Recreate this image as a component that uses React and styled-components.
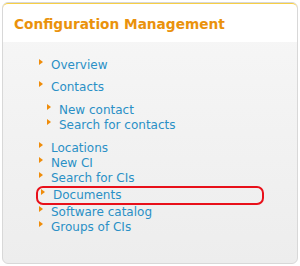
import React from "react";
import styled, { createGlobalStyle } from "styled-components";

const Global = createGlobalStyle`
    html, body {
        margin: 0;
        padding: 0;
        background: #ffffff;
    }
    body {
        font-family: "DejaVu Sans", Verdana, sans-serif;
    }
`;

const Page = styled.div`
    width: 300px;
    height: 266px;
    overflow: hidden;
    padding: 2px 2px 0 2px;
    box-sizing: border-box;
    display: flex;
    flex-direction: column;
    gap: 2px;
`;

const Panel = styled.div`
    border: 1px solid #d8d8d8;
    border-radius: 6px;
    overflow: hidden;
    background: linear-gradient(#f7f7f7, #ededed);
    height: ${(props) => props.h}px;
    flex-shrink: 0;
`;

const Header = styled.div`
    height: 38px;
    background: #ffffff;
    border-top: 2px solid #f7cf45;
    border-left: 1px solid #f7cf45;
    border-right: 1px solid #f7cf45;
    border-radius: 6px 6px 0 0;
    margin: -1px -1px 0 -1px;
    padding-left: 11px;
    display: flex;
    align-items: center;
`;

const Title = styled.h2`
    margin: 1px 0 0 0;
    font-size: 13.7px;
    font-weight: bold;
    color: #ea920c;
`;

const Body = styled.div`
    padding: 16px 0 0 33px;
    display: flex;
    flex-direction: column;
    gap: 7px;
`;

const List = styled.ul`
    list-style: none;
    margin: 0;
    padding: 0 0 0 ${(props) => props.indent || 0}px;
    margin-top: ${(props) => props.top || 0}px;
`;

const Item = styled.li`
    position: relative;
    height: 15px;
    line-height: 15px;
    padding-left: 15px;
    font-size: 12px;
    width: 214px;

    &::before {
        content: "";
        position: absolute;
        left: 3px;
        top: 1px;
        border-left: 4px solid #ef8c0a;
        border-top: 3px solid transparent;
        border-bottom: 3px solid transparent;
    }
`;

const Marked = styled(Item)`
    border: 2px solid #e8101a;
    border-radius: 7px;
    width: 209px;
`;

const Link = styled.a`
    color: #2a90c6;
    text-decoration: none;
`;

const Entry = ({ label, marked }) => {
    const Row = marked ? Marked : Item;
    return (
        <Row>
            <Link href="#">{label}</Link>
        </Row>
    );
};

function App() {
    return (
        <>
            <Global />
            <Page>
                <Panel h={260}>
                    <Header>
                        <Title>Configuration Management</Title>
                    </Header>
                    <Body>
                        <List>
                            <Entry label="Overview" />
                        </List>
                        <List>
                            <Entry label="Contacts" />
                        </List>
                        <List indent={8} top={1}>
                            <Entry label="New contact" />
                            <Entry label="Search for contacts" />
                        </List>
                        <List top={1}>
                            <Entry label="Locations" />
                            <Entry label="New CI" />
                            <Entry label="Search for CIs" />
                            <Entry label="Documents" marked />
                            <Entry label="Software catalog" />
                            <Entry label="Groups of CIs" />
                        </List>
                    </Body>
                </Panel>
                <Panel h={20} />
            </Page>
        </>
    );
}

export default App;
